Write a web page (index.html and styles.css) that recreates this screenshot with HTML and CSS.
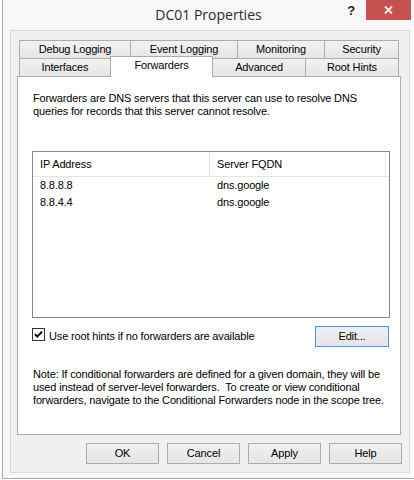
FILE: index.html
```html
<!DOCTYPE html>
<html>
<head>
<meta charset="utf-8">
<title>DC01 Properties</title>
<link rel="stylesheet" href="styles.css">
</head>
<body>
<div class="window">
  <div class="titlebar">
    <div class="title">DC01 Properties</div>
    <div class="controls">
      <span class="help">?</span>
      <span class="close"><svg width="9" height="8" viewBox="0 0 9 8"><path d="M1 0.5 L8 7.5 M8 0.5 L1 7.5" stroke="#fff" stroke-width="1.8" fill="none"/></svg></span>
    </div>
  </div>
  <div class="dialog">
    <div class="tabs">
      <div class="tabrow">
        <div class="tab tab-debug">Debug Logging</div>
        <div class="tab tab-event">Event Logging</div>
        <div class="tab tab-monitor">Monitoring</div>
        <div class="tab tab-security">Security</div>
      </div>
      <div class="tabrow">
        <div class="tab tab-interfaces">Interfaces</div>
        <div class="tab tab-forwarders active">Forwarders</div>
        <div class="tab tab-advanced">Advanced</div>
        <div class="tab tab-roothints">Root Hints</div>
      </div>
    </div>
    <div class="panel">
      <p class="intro">Forwarders are DNS servers that this server can use to resolve DNS<br>queries for records that this server cannot resolve.</p>
      <div class="list">
        <div class="list-head">
          <div class="hcell">IP Address</div>
          <div class="hcell">Server FQDN</div>
          <div class="hfill"></div>
        </div>
        <div class="row"><div class="cell">8.8.8.8</div><div class="cell">dns.google</div></div>
        <div class="row"><div class="cell">8.8.4.4</div><div class="cell">dns.google</div></div>
      </div>
      <div class="options">
        <span class="check"><svg width="13" height="13" viewBox="0 0 13 13"><rect x="0.5" y="0.5" width="12" height="12" fill="#fff" stroke="#333"/><path d="M3 6.2 L5.3 8.6 L10 3.6" stroke="#000" stroke-width="2" fill="none"/></svg></span>
        <span class="label">Use root hints if no forwarders are available</span>
        <button class="btn edit">Edit...</button>
      </div>
      <p class="note">Note: If conditional forwarders are defined for a given domain, they will be<br>used instead of server-level forwarders.&nbsp; To create or view conditional<br>forwarders, navigate to the Conditional Forwarders node in the scope tree.</p>
    </div>
    <div class="buttons">
      <button class="btn">OK</button>
      <button class="btn">Cancel</button>
      <button class="btn">Apply</button>
      <button class="btn">Help</button>
    </div>
  </div>
</div>
</body>
</html>
```
FILE: styles.css
```css
* { box-sizing: border-box; }
body {
  margin: 0;
  width: 414px;
  height: 480px;
  overflow: hidden;
  background: #fff;
  font-family: "Liberation Sans", Arial, sans-serif;
  font-size: 11px;
  letter-spacing: -0.15px;
  color: #000;
}
.window {
  margin-left: 2px;
  height: 479px;
  border-left: 1px solid #a9a9a9;
  border-bottom: 1px solid #a9a9a9;
  background: #f8f8f8;
}
.titlebar {
  height: 30px;
  display: grid;
  grid-template-columns: 1fr auto 1fr;
  align-items: start;
}
.title {
  grid-column: 2;
  font-family: "Open Sans", "Noto Sans", sans-serif;
  font-size: 14px;
  letter-spacing: 0;
  line-height: 30px;
  color: #2b2b2b;
}
.controls {
  grid-column: 3;
  display: flex;
  justify-content: flex-end;
  align-items: flex-start;
}
.help {
  margin-top: 3px;
  margin-right: 11px;
  font-weight: bold;
  font-size: 13px;
  line-height: 16px;
  color: #222;
}
.close {
  width: 45px;
  height: 20px;
  margin-right: 3px;
  background: #c75050;
  display: flex;
  align-items: center;
  justify-content: center;
}
.dialog {
  margin-left: 7px;
  width: 400px;
  height: 443px;
  border: 1px solid #dadada;
  background: #f0f0f0;
  padding: 9px 7px 8px 6px;
}
.tabs { margin: 0 3px 0 2px; }
.tabrow {
  display: flex;
  align-items: flex-start;
  height: 18px;
}
.tab {
  flex: none;
  height: 18px;
  margin-left: -1px;
  border: 1px solid #acacac;
  border-bottom: none;
  background: linear-gradient(#f2f2f2, #e6e6e6);
  text-align: center;
  line-height: 17px;
  white-space: nowrap;
}
.tab:first-child { margin-left: 0; }
.tab-debug { width: 112px; }
.tab-event { width: 108px; }
.tab-monitor { width: 88px; }
.tab-security { width: 75px; }
.tab-interfaces { width: 92px; }
.tab-forwarders { width: 103px; }
.tab-advanced { width: 94px; }
.tab-roothints { width: 94px; }
.tab.active {
  position: relative;
  z-index: 1;
  height: 21px;
  margin-top: -2px;
  margin-bottom: -1px;
  background: #fff;
}
.panel {
  width: 384px;
  height: 359px;
  border: 1px solid #adadad;
  background: #fff;
  padding: 15px 10px 0 14px;
}
.intro, .note {
  margin: 0 0 0 1px;
  line-height: 13px;
  white-space: nowrap;
}
.list {
  margin-top: 33px;
  height: 167px;
  border: 1px solid #828790;
}
.list-head {
  display: grid;
  grid-template-columns: 177px 176px 1fr;
  height: 25px;
  border-bottom: 1px solid #e5e5e5;
}
.hcell {
  padding-left: 7px;
  line-height: 24px;
  border-right: 1px solid #e5e5e5;
}
.row {
  display: grid;
  grid-template-columns: 177px 1fr;
  height: 17px;
  line-height: 17px;
}
.cell { padding-left: 7px; }
.options {
  margin-top: 8px;
  display: flex;
  align-items: flex-start;
}
.check {
  display: block;
  width: 13px;
  height: 13px;
  margin-top: 2px;
}
.check svg { display: block; }
.label {
  margin-left: 4px;
  margin-top: 4px;
  line-height: 13px;
}
.btn {
  width: 73px;
  height: 21px;
  padding: 0;
  border: 1px solid #acacac;
  background: linear-gradient(#f0f0f0, #e5e5e5);
  font-family: "Liberation Sans", Arial, sans-serif;
  font-size: 11px;
  letter-spacing: -0.15px;
  line-height: 19px;
  color: #000;
  text-align: center;
}
.edit {
  width: 74px;
  margin-left: auto;
  margin-right: 1px;
  border-color: #3399ff;
}
.note { margin-top: 21px; }
.buttons {
  margin-top: 8px;
  display: flex;
  justify-content: flex-end;
  gap: 8px;
}
```
